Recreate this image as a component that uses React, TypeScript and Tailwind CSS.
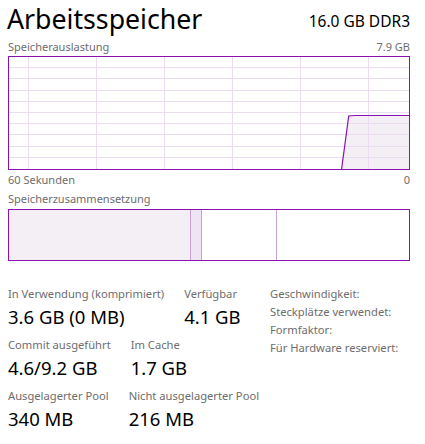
import React from "react";

const font = { fontFamily: '"Noto Sans", sans-serif' };

function UsageGraph() {
  const w = 400;
  const h = 112;
  const vx = [19, 87, 155, 223, 291, 359];
  const hy = [1, 2, 3, 4, 5, 6, 7, 8, 9].map((k) => Math.round(k * 11.2) - 0.5);
  return (
    <svg width={w} height={h} className="block">
      <polygon points="332.6,112 339.7,59 346,58.5 400,58.5 400,112" fill="#f3eff4" />
      {vx.map((x) => (
        <line key={"v" + x} x1={x + 0.5} y1={0} x2={x + 0.5} y2={h} stroke="#ecdcf2" strokeWidth={1} />
      ))}
      {hy.map((y) => (
        <line key={"h" + y} x1={0} y1={y} x2={w} y2={y} stroke="#ecdcf2" strokeWidth={1} />
      ))}
      <polyline points="332.6,112 339.7,59 346,58.5 400,58.5" fill="none" stroke="#8b12ae" strokeWidth={1.2} />
    </svg>
  );
}

function Stat({ label, value }: { label: string; value: string }) {
  return (
    <div className="flex flex-col whitespace-nowrap">
      <span className="text-[11.2px] leading-[18px] text-[#6d6d6d]">{label}</span>
      <span className="text-[18.5px] leading-[28px] text-black">{value}</span>
    </div>
  );
}

export default function App() {
  return (
    <div className="w-[425px] h-[444px] bg-white text-black overflow-hidden pl-2" style={font}>
      <div className="w-[402px]">
        <div className="flex justify-between items-start h-[38px]">
          <div className="text-[26.7px] leading-[37px] ml-[-1px] whitespace-nowrap">Arbeitsspeicher</div>
          <div className="text-[15.5px] leading-[22px] mt-[10px] whitespace-nowrap">16.0 GB DDR3</div>
        </div>
        <div className="flex justify-between items-center h-[18px] text-[11px] text-[#6d6d6d]">
          <span>Speicherauslastung</span>
          <span>7.9 GB</span>
        </div>
        <div className="border border-[#8b12ae] h-[114px] w-[402px]">
          <UsageGraph />
        </div>
        <div className="flex justify-between items-center h-[20px] text-[11px] text-[#6d6d6d]">
          <span>60 Sekunden</span>
          <span>0</span>
        </div>
        <div className="flex items-center h-[19px] text-[11px] text-[#6d6d6d]">
          <span>Speicherzusammensetzung</span>
        </div>
        <div className="border border-[#8b12ae] h-[52px] w-[402px] flex">
          <div className="w-[182px] bg-[#f3eff4] border-r border-[#c9a0d8]" />
          <div className="w-[11px] bg-[#efe4f3] border-r border-[#c9a0d8]" />
          <div className="w-[75px] bg-white border-r border-[#c9a0d8]" />
          <div className="flex-1 bg-white" />
        </div>
      </div>
      <div className="flex mt-[24px]">
        <div className="w-[262px] flex flex-col gap-[5px]">
          <div className="flex gap-5">
            <Stat label="In Verwendung (komprimiert)" value="3.6 GB (0 MB)" />
            <Stat label="Verfügbar" value="4.1 GB" />
          </div>
          <div className="flex gap-5">
            <Stat label="Commit ausgeführt" value="4.6/9.2 GB" />
            <Stat label="Im Cache" value="1.7 GB" />
          </div>
          <div className="flex gap-5">
            <Stat label="Ausgelagerter Pool" value="340 MB" />
            <Stat label="Nicht ausgelagerter Pool" value="216 MB" />
          </div>
        </div>
        <div className="flex flex-col text-[11.2px] leading-[18px] text-[#6d6d6d] whitespace-nowrap">
          <span>Geschwindigkeit:</span>
          <span>Steckplätze verwendet:</span>
          <span>Formfaktor:</span>
          <span>Für Hardware reserviert:</span>
        </div>
      </div>
    </div>
  );
}
